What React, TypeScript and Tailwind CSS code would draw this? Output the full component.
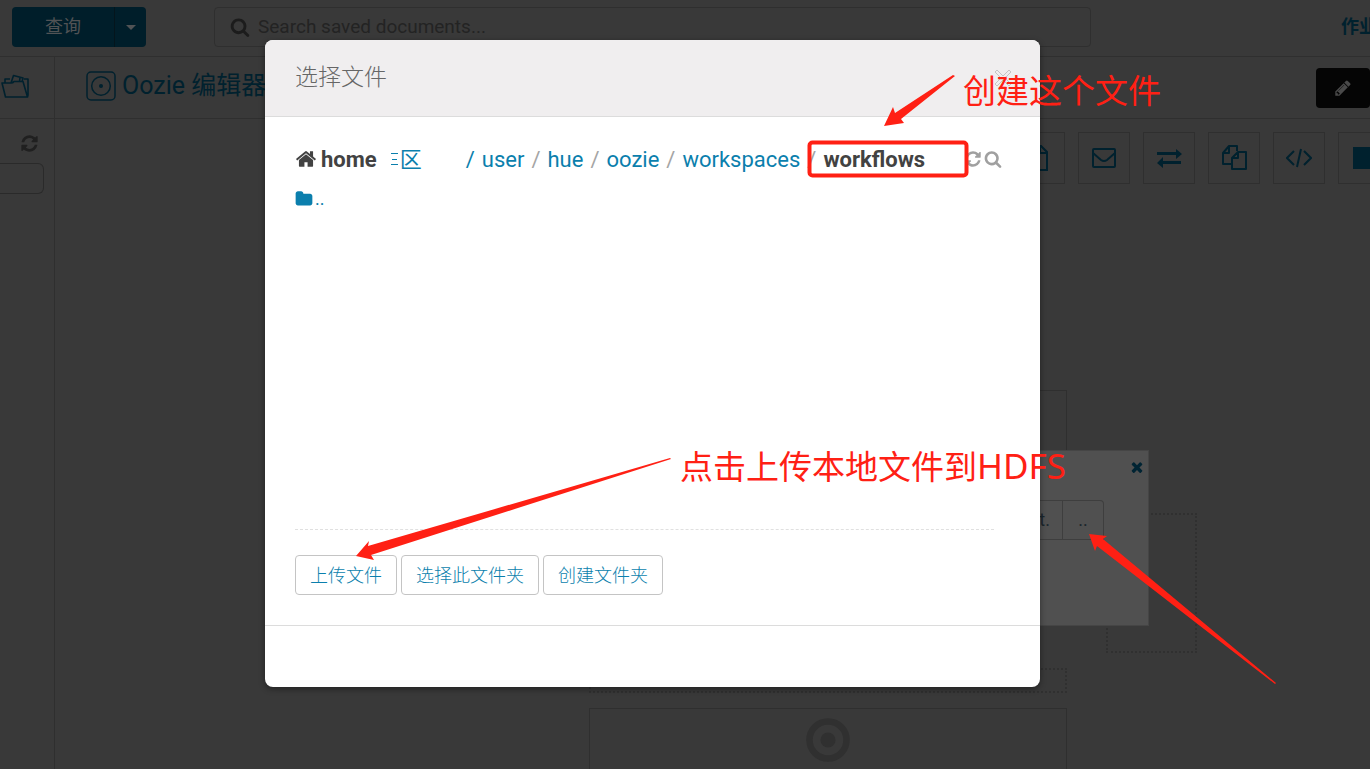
import React, { useState } from 'react';

const ICONS = {
  search:
    'M1216 832q0-185-131.5-316.5t-316.5-131.5-316.5 131.5-131.5 316.5 131.5 316.5 316.5 131.5 316.5-131.5 131.5-316.5zm512 832q0 52-38 90t-90 38q-54 0-90-38l-343-342q-179 124-399 124-143 0-273.5-55.5t-225-150-150-225-55.5-273.5 55.5-273.5 150-225 225-150 273.5-55.5 273.5 55.5 225 150 150 225 55.5 273.5q0 220-124 399l343 343q37 37 37 90z',
  refresh:
    'M1639 1056q0 5-1 7-64 268-268 434.5t-478 166.5q-146 0-282.5-55t-243.5-157l-129 129q-19 19-45 19t-45-19-19-45v-448q0-26 19-45t45-19h448q26 0 45 19t19 45-19 45l-137 137q71 66 161 102t187 36q134 0 250-65t186-179q11-17 53-117 8-23 30-23h192q13 0 22.5 9.5t9.5 22.5zm25-800v448q0 26-19 45t-45 19h-448q-26 0-45-19t-19-45 19-45l138-138q-148-137-349-137-134 0-250 65t-186 179q-11 17-53 117-8 23-30 23h-199q-13 0-22.5-9.5t-9.5-22.5v-7q65-268 270-434.5t480-166.5q146 0 284 55.5t245 156.5l130-129q19-19 45-19t45 19 19 45z',
  times:
    'M1490 1322q0 40-28 68l-136 136q-28 28-68 28t-68-28l-294-294-294 294q-28 28-68 28t-68-28l-136-136q-28-28-28-68t28-68l294-294-294-294q-28-28-28-68t28-68l136-136q28-28 68-28t68 28l294 294 294-294q28-28 68-28t68 28l136 136q28 28 28 68t-28 68l-294 294 294 294q28 28 28 68z',
  home:
    'M1472 992v480q0 26-19 45t-45 19h-384v-384h-256v384h-384q-26 0-45-19t-19-45v-480q0-1 .5-3t.5-3l575-474 575 474q1 2 1 6zm223-69l-62 74q-8 9-21 11h-3q-13 0-21-7l-692-577-692 577q-12 8-24 7-13-2-21-11l-62-74q-8-10-7-23.5t11-21.5l719-599q32-26 76-26t76 26l244 204v-195q0-14 9-23t23-9h192q14 0 23 9t9 23v408l219 182q10 8 11 21.5t-7 23.5z',
  folder:
    'M1728 608v704q0 92-66 158t-158 66h-1216q-92 0-158-66t-66-158v-960q0-92 66-158t158-66h320q92 0 158 66t66 158v32h672q92 0 158 66t66 158z',
  pencil:
    'M491 1536l91-91-235-235-91 91v107h128v128h107zm523-928q0-22-22-22-10 0-17 7l-542 542q-7 7-7 17 0 22 22 22 10 0 17-7l542-542q7-7 7-17zm-54-192l416 416-832 832h-416v-416zm683 96q0 53-37 90l-166 166-416-416 166-165q36-38 90-38 53 0 91 38l235 234q37 39 37 91z',
};

function Icon({ name, className = '' }: { name: keyof typeof ICONS; className?: string }) {
  return (
    <svg viewBox="0 0 1792 1792" fill="currentColor" className={`shrink-0 ${className}`} aria-hidden="true">
      <path d={ICONS[name]} />
    </svg>
  );
}

// Outline drawings for the action toolbar, all on a 26px grid
const actions = [
  {
    label: 'File',
    drawing: <path d="M4 1h11l6 6v18H4zM14 1v7h7" fill="none" stroke="currentColor" strokeWidth="2" />,
  },
  {
    label: 'Email',
    drawing: (
      <path
        d="M3 4h20q1 0 1 1v16q0 1-1 1H3q-1 0-1-1V5q0-1 1-1zM2 8l8 7q3 2 6 0l8-7"
        fill="none"
        stroke="currentColor"
        strokeWidth="2"
      />
    ),
  },
  {
    label: 'Transfer',
    drawing: <path d="M1 7h19V4l6 5-6 5v-4H1zM25 16H7v-4l-6 6 6 5v-4h18z" fill="currentColor" />,
  },
  {
    label: 'Copy',
    drawing: (
      <path
        d="M11 19H2V8l6-7h8v5M8 1v7H2M11 13l6-6h8v17H11zM17 7v6h-6"
        fill="none"
        stroke="currentColor"
        strokeWidth="2"
        strokeLinejoin="round"
      />
    ),
  },
  {
    label: 'Script',
    drawing: <path d="M8 6l-7 7 7 7M18 6l7 7-7 7M15 4l-4 18" fill="none" stroke="currentColor" strokeWidth="2" />,
  },
  { label: 'Terminal', drawing: <path d="M2 2h24v22H2z" fill="currentColor" /> },
];

const crumbs = ['user', 'hue', 'oozie', 'workspaces'];

function TopBar() {
  return (
    <header className="flex h-[57px] shrink-0 items-start border-b border-[#2f2f2f] pt-[7px] pl-3">
      <div className="flex h-10 w-[134px] shrink-0 overflow-hidden rounded bg-[#001e2a] text-[#515355]">
        <button className="flex-1 text-lg">查询</button>
        <button aria-label="More" className="flex w-8 items-center justify-center border-l border-[#04151c]">
          <svg viewBox="0 0 10 5" className="h-[5px] w-2.5" fill="currentColor">
            <path d="M0 0h10L5 5z" />
          </svg>
        </button>
      </div>
      <label className="mr-[250px] ml-[68px] flex h-10 min-w-0 flex-1 items-center gap-2 rounded-sm border border-[#2f2f2f] pl-[15px]">
        <Icon name="search" className="h-5 w-5 text-[#1c1c1c]" />
        <input
          type="text"
          aria-label="Search"
          placeholder="Search saved documents..."
          className="min-w-0 flex-1 bg-transparent text-[19px] placeholder-[#232323] outline-none"
        />
      </label>
      <a href="#jobs" className="h-10 w-[29px] shrink-0 overflow-hidden text-lg leading-10 font-bold whitespace-nowrap text-[#00212e]">
        作业
      </a>
    </header>
  );
}

function Sidebar() {
  return (
    <aside className="flex w-[55px] shrink-0 flex-col border-r border-[#2f2f2f]">
      <div className="flex h-[62px] items-center border-b border-[#2f2f2f] pb-1">
        <svg viewBox="0 0 30 26" className="h-[26px] w-[30px] text-[#00212e]" fill="none" stroke="currentColor" strokeWidth="1.6" strokeLinejoin="round">
          <path d="M2 10h9q2 0 3-1.500h9l4.500 15.500H5.500zM5 10V6h5M11 10l2.500-7.500 9.500 2.500-1 4M20 4.500l-.500 4M24 6h4v16l-.5 2" />
        </svg>
      </div>
      <div className="flex flex-col items-end gap-2.5 pt-[15px] pr-2.5">
        <Icon name="refresh" className="mr-[5px] h-[19px] w-[19px] text-[#202020]" />
        <input type="text" aria-label="Filter" className="h-[31px] w-full rounded-r-md border border-l-0 border-[#2a2a2a] bg-transparent" />
      </div>
    </aside>
  );
}

function PropertiesPopup() {
  return (
    <div className="absolute top-[331px] left-[700px] flex h-[176px] w-[394px] flex-col border border-[#454545] bg-[#505050]">
      <button aria-label="Remove" className="mt-2 mr-[3px] ml-auto text-[#002433]">
        <Icon name="times" className="h-4 w-4" />
      </button>
      <div className="mt-[25px] mr-11 flex h-10 self-end text-lg text-[#1b262c]">
        <button className="w-[162px] border border-[#3e3e3e] pr-3 text-right">Select.</button>
        <button className="w-[41px] rounded-tr border border-l-0 border-[#3e3e3e]">..</button>
      </div>
    </div>
  );
}

function Workspace() {
  return (
    <main className="flex min-w-0 flex-1 flex-col overflow-hidden">
      <div className="flex h-[62px] shrink-0 items-center justify-between border-b border-[#2f2f2f] pl-[31px] text-[#00212e]">
        <div className="flex items-center gap-1.5 pb-1">
          <svg viewBox="0 0 30 30" className="h-[30px] w-[30px] shrink-0" fill="none" stroke="currentColor">
            <rect x="1" y="1" width="28" height="28" rx="4" strokeWidth="1.5" />
            <circle cx="15" cy="15" r="9.3" strokeWidth="1.5" />
            <circle cx="15" cy="15" r="2" fill="currentColor" stroke="none" />
          </svg>
          <h1 className="text-[25px] whitespace-nowrap">Oozie 编辑器</h1>
        </div>
        <button aria-label="Edit" className="flex h-10 w-[54px] items-center justify-center rounded bg-[#050505] text-[#4a4a4a]">
          <Icon name="pencil" className="h-[18px] w-[18px]" />
        </button>
      </div>
      <div className="relative flex-1 overflow-hidden">
        <div className="flex gap-[13px] pt-[13px] pl-[958px]">
          {actions.map(({ label, drawing }) => (
            <button key={label} aria-label={label} className="flex h-[52px] w-[52px] shrink-0 items-center justify-center border border-[#2f2f2f] text-[#00212e]">
              <svg viewBox="0 0 26 26" className="h-[26px] w-[26px]">{drawing}</svg>
            </button>
          ))}
        </div>

        {/* Workflow graph nodes */}
        <div className="absolute top-[271px] left-[534px] h-[160px] w-[478px] border border-[#2f2f2f]" />
        <div className="absolute top-[394px] left-[1051px] h-[140px] w-[91px] border-2 border-dotted border-[#303030]" />
        <div className="absolute top-[549px] left-[534px] h-[25px] w-[478px] border-2 border-dotted border-[#303030]" />
        <div className="absolute top-[589px] left-[534px] flex h-[90px] w-[478px] justify-center border border-[#2f2f2f] pt-[9px]">
          <svg viewBox="0 0 44 44" className="h-11 w-11 text-[#303030]">
            <circle cx="22" cy="22" r="18.5" fill="none" stroke="currentColor" strokeWidth="6.5" />
            <circle cx="22" cy="22" r="7.5" fill="currentColor" />
          </svg>
        </div>
        <PropertiesPopup />
      </div>
    </main>
  );
}

function FileChooser({ onClose }: { onClose: () => void }) {
  const buttonClass = 'h-10 rounded border border-[#c4c4c4] bg-white px-3.5 pt-0.5 text-lg font-light text-[#0b7fad]';

  return (
    <div role="dialog" aria-label="选择文件" className="flex w-[775px] flex-col overflow-hidden rounded-lg bg-white shadow-[0_2px_6px_rgba(0,0,0,0.4)]">
      <div className="flex h-[77px] items-center justify-between border-b border-[#dcdcdc] bg-[#f0eeef] pr-7 pl-[30px]">
        <h2 className="text-[23px] font-light text-[#666]">选择文件</h2>
        <button aria-label="Close" onClick={onClose} className="text-[#c4c4c4]">
          <svg viewBox="0 0 18 18" className="h-[18px] w-[18px]" fill="none" stroke="currentColor" strokeWidth="1">
            <path d="M3 1l6 6 6-6 2 2-6 6 6 6-2 2-6-6-6 6-2-2 6-6-6-6z" />
          </svg>
        </button>
      </div>

      <div className="flex flex-col border-b border-[#dcdcdc] px-[30px] pt-[26px] pb-[30px]">
        <nav className="flex h-8 items-center text-[22px] whitespace-nowrap text-[#0b7fad]">
          <a href="#home" className="flex items-center gap-1 font-bold text-[#424242]">
            <Icon name="home" className="h-[22px] w-[22px]" />
            home
          </a>
          <a href="#trash" className="ml-3.5 flex items-center gap-0.5">
            <svg viewBox="0 0 7 14" className="h-3.5 w-[7px]" stroke="currentColor" strokeWidth="1">
              <path d="M0 1.5h7M1 7.5h5M0 12.5h7" />
            </svg>
            区
          </a>
          <a href="#root" className="ml-11">/</a>
          {crumbs.map((crumb, i) => (
            <React.Fragment key={crumb}>
              {i > 0 && <span className="ml-[7px] text-[#a5a5a5]">/</span>}
              <a href={`#${crumb}`} className="ml-[7px]">{crumb}</a>
            </React.Fragment>
          ))}
          <span className="ml-[7px] text-[#a5a5a5]">/</span>
          <span className="ml-[7px] font-bold text-[#424242]">workflows</span>
          <div className="ml-auto flex gap-0.5 pr-2 text-[#a0a0a0]">
            <button aria-label="Refresh"><Icon name="refresh" className="h-[18px] w-[18px]" /></button>
            <button aria-label="Search files"><Icon name="search" className="h-[18px] w-[18px]" /></button>
          </div>
        </nav>
        <a href="#parent" className="mt-2.5 flex h-7 items-center gap-0.5 text-lg text-[#0b7fad]">
          <Icon name="folder" className="h-[18px] w-[18px]" />
          ..
        </a>
        <div className="mt-[316px] border-t border-dashed border-[#e0e0e0] mr-4" />
        <div className="mt-[25px] flex gap-1">
          <button className={buttonClass}>上传文件</button>
          <button className={buttonClass}>选择此文件夹</button>
          <button className={buttonClass}>创建文件夹</button>
        </div>
      </div>
      <div className="h-[61px]" />
    </div>
  );
}

// Red tutorial marks lying over everything else
function Annotations() {
  return (
    <div className="pointer-events-none absolute inset-0 z-20 overflow-hidden font-['Noto_Sans','Noto_Sans_CJK_SC',sans-serif] text-[33px] leading-10 whitespace-nowrap text-[#ff2014]">
      <svg viewBox="0 0 1370 769" className="absolute top-0 left-0 h-[769px] w-[1370px]" fill="currentColor">
        <path d="M884 126L893 107L895 113L953 75L955 76L901 119L904 123Z" />
        <path d="M356 556L369 541L368 546L670 458L671 459L371 555L374 560Z" />
        <path d="M1089 534L1107 536L1103 539L1276 683L1275 684L1097 546L1095 551Z" />
        <rect x="809.5" y="142.5" width="157" height="33" rx="3" fill="none" stroke="currentColor" strokeWidth="4" />
      </svg>
      <p className="absolute top-[71px] left-[963px]">创建这个文件</p>
      <p className="absolute top-[446px] left-[680px]">
        点击上传本地文件到<span className="text-[35px]">HDFS</span>
      </p>
    </div>
  );
}

export default function App() {
  const [open, setOpen] = useState(true);

  return (
    <div className="relative flex h-screen flex-col overflow-hidden bg-[#393939] font-['Roboto','Noto_Sans_CJK_SC',sans-serif]">
      <TopBar />
      <div className="flex min-h-0 flex-1">
        <Sidebar />
        <Workspace />
      </div>
      {open && (
        <div className="absolute inset-0 z-10 flex items-start pt-10 pl-[265px]">
          <FileChooser onClose={() => setOpen(false)} />
        </div>
      )}
      <Annotations />
    </div>
  );
}
